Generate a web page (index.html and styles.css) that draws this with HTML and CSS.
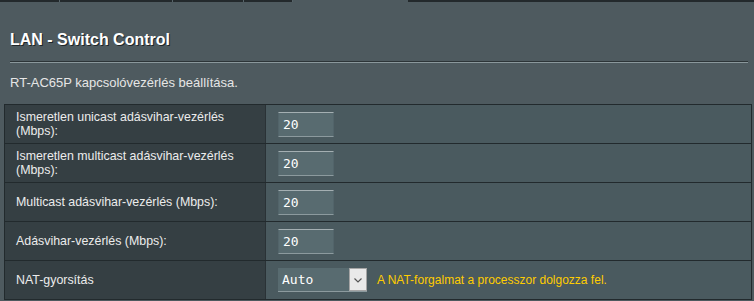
FILE: index.html
```html
<!DOCTYPE html>
<html>
<head>
<meta charset="utf-8">
<link rel="stylesheet" href="styles.css">
</head>
<body>
<div class="tabs">
  <span class="tab t1"></span><span class="tab t2"></span><span class="tab t3"></span><span class="tab t4"></span><span class="gap"></span><span class="tab t5"></span>
</div>
<div class="page">
  <h1 class="title">LAN - Switch Control</h1>
  <div class="rule"></div>
  <p class="desc">RT-AC65P kapcsolóvezérlés beállítása.</p>
  <div class="form">
    <div class="row">
      <div class="label">Ismeretlen unicast adásvihar-vezérlés (Mbps):</div>
      <div class="value"><input class="field" type="text" value="20"></div>
    </div>
    <div class="row">
      <div class="label">Ismeretlen multicast adásvihar-vezérlés (Mbps):</div>
      <div class="value"><input class="field" type="text" value="20"></div>
    </div>
    <div class="row">
      <div class="label">Multicast adásvihar-vezérlés (Mbps):</div>
      <div class="value"><input class="field" type="text" value="20"></div>
    </div>
    <div class="row">
      <div class="label">Adásvihar-vezérlés (Mbps):</div>
      <div class="value"><input class="field" type="text" value="20"></div>
    </div>
    <div class="row">
      <div class="label">NAT-gyorsítás</div>
      <div class="value">
        <div class="select">
          <span class="sel-text">Auto</span>
          <span class="sel-arrow"><svg width="10" height="8" viewBox="0 0 10 8"><path d="M1.5 2.5 L5 6 L8.5 2.5" fill="none" stroke="#555" stroke-width="1.2"/></svg></span>
        </div>
        <span class="hint">A NAT-forgalmat a processzor dolgozza fel.</span>
      </div>
    </div>
  </div>
</div>
</body>
</html>
```

FILE: styles.css
```css
html, body {
  margin: 0;
  padding: 0;
}
body {
  background: #4e5a5f;
  font-family: "Liberation Sans", Arial, sans-serif;
  color: #fff;
  width: 754px;
  height: 301px;
  overflow: hidden;
}
.tabs {
  display: flex;
  height: 2px;
}
.tab {
  height: 2px;
  background: #23292c;
  border-right: 1px solid #58656a;
}
.t1 { width: 59px; }
.t2 { width: 112px; }
.t3 { width: 70px; }
.t4 { width: 48px; }
.gap { width: 115px; }
.t5 { flex: 1; border-right: none; }
.page {
  padding: 0 6px 0 4px;
}
.title {
  margin: 28px 0 0 6px;
  font-size: 16px;
  line-height: 20px;
  font-weight: bold;
  color: #fff;
  text-shadow: 1px 1px 0 #1f2528;
}
.rule {
  margin: 11px 0 0 6px;
  height: 0;
  border-top: 1px solid #2c3437;
  border-bottom: 1px solid #8a979b;
}
.desc {
  margin: 12px 0 0 6px;
  font-size: 13px;
  line-height: 16px;
  color: #e6e6e6;
}
.form {
  margin-top: 13px;
  border: 1px solid #222a2d;
  border-bottom: none;
  width: 746px;
}
.row {
  display: grid;
  grid-template-columns: 261px 1fr;
  height: 38px;
  border-bottom: 1px solid #222a2d;
}
.label {
  background: #353f43;
  border-right: 1px solid #2a3236;
  padding: 0 20px 0 11px;
  display: flex;
  align-items: center;
  font-size: 12.4px;
  line-height: 14px;
  color: #ececec;
}
.value {
  background: #4a5a5f;
  display: flex;
  align-items: center;
  padding-left: 12px;
}
.field {
  box-sizing: border-box;
  width: 56px;
  height: 25px;
  margin: 0;
  padding: 1px 0 0 4px;
  background: #586b70;
  border: 1px solid #52646a;
  border-top: 1px solid #a4afb2;
  border-bottom: 1px solid #8c9a9e;
  color: #fff;
  font-family: "DejaVu Sans Mono", "Liberation Mono", monospace;
  font-size: 13px;
  outline: none;
}
.select {
  box-sizing: border-box;
  width: 89px;
  height: 24px;
  display: flex;
  align-items: stretch;
  background: #586b70;
  border-bottom: 1px solid #8c9a9e;
}
.sel-text {
  flex: 1;
  display: flex;
  align-items: center;
  padding-left: 4px;
  font-family: "DejaVu Sans Mono", "Liberation Mono", monospace;
  font-size: 13px;
  color: #fff;
}
.sel-arrow {
  box-sizing: border-box;
  width: 18px;
  background: #e9e9e9;
  border: 1px solid #a5a5a5;
  display: flex;
  align-items: center;
  justify-content: center;
}
.hint {
  margin-left: 10px;
  font-size: 12px;
  color: #ffcc00;
}
```
